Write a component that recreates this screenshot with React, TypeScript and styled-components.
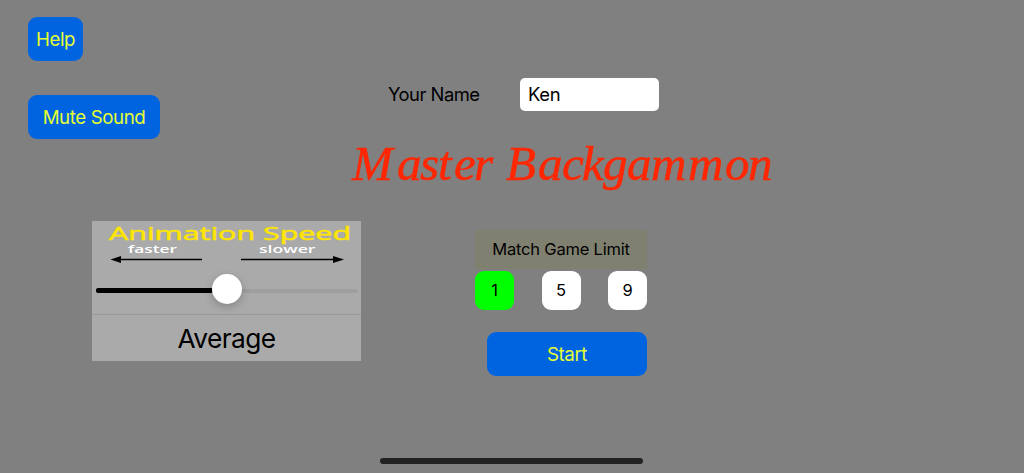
import { useState } from 'react'
import styled, { createGlobalStyle } from 'styled-components'

const GlobalStyle = createGlobalStyle`
    * {
        box-sizing: border-box;
    }

    body {
        margin: 0;
        background: #808080;
        font-family: Inter, 'Liberation Sans', sans-serif;
        color: #000;
        overflow: hidden;
    }
`

const Page = styled('main')`
    display: flex;
    flex-direction: column;
    height: 473px;
    background: #808080;
`

const Columns = styled('div')`
    display: flex;
    flex: 1;
`

const Side = styled('div')`
    width: 361px;
    padding: 17px 0 0 28px;
    display: flex;
    flex-direction: column;
    align-items: flex-start;
`

const Center = styled('div')`
    width: 423px;
    padding-top: 78px;
    display: flex;
    flex-direction: column;
`

type ButtonProps = { $width: number; $gap?: number }

const Button = styled('button')<ButtonProps>`
    width: ${({ $width }) => $width}px;
    height: 44px;
    margin-top: ${({ $gap }) => $gap || 0}px;
    padding: 0;
    border: 0;
    border-radius: 9px;
    background: #0064e1;
    color: #e6ff32;
    font: inherit;
    font-size: 18.7px;
    letter-spacing: -0.4px;
    white-space: nowrap;
`

const Panel = styled('section')`
    width: 269px;
    height: 140px;
    margin: 82px 0 0 64px;
    background: #aaa;
`

const PanelTop = styled('div')`
    height: 94px;
    border-bottom: 1px solid #999;
`

const Caption = styled('svg')`
    display: block;
    font-family: 'Open Sans', 'Noto Sans', sans-serif;
    font-weight: 600;
`

const Slider = styled('div')`
    display: flex;
    align-items: center;
    height: 30px;
    margin: 5px 3px 0 4px;
`

const Track = styled('div')<{ $filled?: boolean }>`
    flex: 1;
    height: ${({ $filled }) => ($filled ? 5 : 4)}px;
    margin-top: 3px;
    border-radius: 2px;
    background: ${({ $filled }) => ($filled ? '#000' : '#9f9fa0')};
`

const Thumb = styled('div')`
    width: 30px;
    height: 30px;
    margin: 0 -1px;
    border-radius: 50%;
    background: #fff;
    box-shadow: 0 3px 8px rgba(0, 0, 0, 0.22);
    z-index: 1;
`

const SpeedName = styled('div')`
    height: 46px;
    padding-top: 2px;
    line-height: 43px;
    text-align: center;
    font-size: 26.3px;
    letter-spacing: -0.6px;
`

const NameRow = styled('label')`
    display: flex;
    align-items: center;
    height: 33px;
    padding-left: 27px;
    font-size: 18.4px;
    letter-spacing: -0.5px;
`

const NameLabel = styled('span')`
    width: 132px;
    padding-bottom: 1px;
`

const NameInput = styled('input')`
    width: 139px;
    height: 33px;
    padding: 0 8px 2px;
    border: 0;
    border-radius: 5px;
    background: #fff;
    color: #000;
    font: inherit;
    letter-spacing: -0.3px;
    outline: none;
`

const Title = styled('svg')`
    display: block;
    margin: 20px 0 0 -16px;
    font-family: 'Apple Chancery', 'Liberation Serif', serif;
    font-style: italic;
    font-size: 49px;
    fill: #ff2600;
    stroke: #ff2600;
    stroke-width: 0.5px;
`

const Match = styled('section')`
    width: 172px;
    margin: 27px 0 0 114px;
    display: flex;
    flex-direction: column;
    align-items: flex-end;
`

const MatchLabel = styled('div')`
    width: 100%;
    height: 39px;
    line-height: 39px;
    background: #808070;
    text-align: center;
    font-size: 16.5px;
    letter-spacing: -0.2px;
`

const Limits = styled('div')`
    display: flex;
    justify-content: space-between;
    width: 100%;
    margin-top: 2px;
`

const Limit = styled('button')<{ $active: boolean }>`
    width: 39px;
    height: 39px;
    padding: 0 0 1px;
    border: 0;
    border-radius: 9px;
    background: ${({ $active }) => ($active ? '#00ff00' : '#fff')};
    color: #000;
    font: inherit;
    font-size: 16.5px;
`

const HomeBar = styled('div')`
    width: 263px;
    height: 6px;
    margin: 0 0 9px 380px;
    border-radius: 3px;
    background: #222;
`

const limits = [1, 5, 9]

const SpeedPanel = () => (
    <Panel>
        <PanelTop>
            <Caption width="269" height="48" viewBox="0 0 269 48">
                <text
                    x="17"
                    y="18.6"
                    fontSize="18.5"
                    fontWeight="400"
                    fill="#ffe600"
                    stroke="#ffe600"
                    strokeWidth="0.5"
                    textLength="242"
                    lengthAdjust="spacingAndGlyphs"
                >
                    Animation Speed
                </text>
                <text
                    x="36"
                    y="32.4"
                    fontSize="11"
                    fill="#fff"
                    textLength="49"
                    lengthAdjust="spacingAndGlyphs"
                >
                    faster
                </text>
                <text
                    x="167"
                    y="32.4"
                    fontSize="11"
                    fill="#fff"
                    textLength="56.5"
                    lengthAdjust="spacingAndGlyphs"
                >
                    slower
                </text>
                <path d="M28 38.5H110M149 38.5H242" stroke="#000" strokeWidth="1.4" />
                <path d="M18.5 38.5L29 35v7zM252 38.5L241 35v7z" />
            </Caption>
            <Slider>
                <Track $filled />
                <Thumb />
                <Track />
            </Slider>
        </PanelTop>
        <SpeedName>Average</SpeedName>
    </Panel>
)

const App = () => {
    const [limit, setLimit] = useState(1)
    const [name, setName] = useState('Ken')

    return (
        <Page>
            <GlobalStyle />
            <Columns>
                <Side>
                    <Button $width={55}>Help</Button>
                    <Button $width={132} $gap={34}>
                        Mute Sound
                    </Button>
                    <SpeedPanel />
                </Side>
                <Center>
                    <NameRow>
                        <NameLabel>Your Name</NameLabel>
                        <NameInput
                            value={name}
                            onChange={(e) => setName(e.target.value)}
                        />
                    </NameRow>
                    <Title width="440" height="72" viewBox="345 131 440 72">
                        <text
                            y="180"
                            x="352 397 420 438 454 474 492 506 538 562 582 603 627 651 688 725 748"
                        >
                            Master Backgammon
                        </text>
                    </Title>
                    <Match>
                        <MatchLabel>Match Game Limit</MatchLabel>
                        <Limits>
                            {limits.map((value) => (
                                <Limit
                                    key={value}
                                    $active={value === limit}
                                    onClick={() => setLimit(value)}
                                >
                                    {value}
                                </Limit>
                            ))}
                        </Limits>
                        <Button $width={160} $gap={22}>
                            Start
                        </Button>
                    </Match>
                </Center>
            </Columns>
            <HomeBar />
        </Page>
    )
}

export default App
